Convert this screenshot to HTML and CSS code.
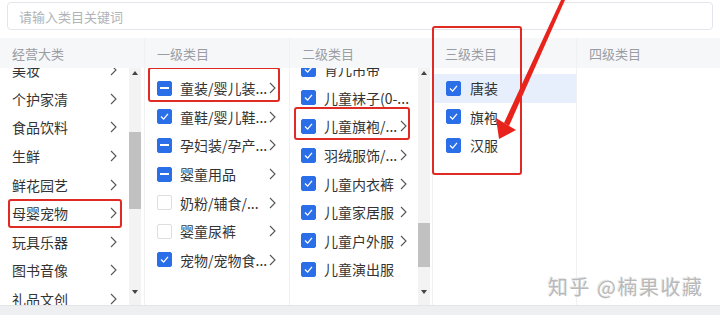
FILE: index.html
```html
<!DOCTYPE html>
<html lang="zh">
<head>
<meta charset="utf-8">
<link rel="stylesheet" href="styles.css">
</head>
<body>
<div class="page">
  <div class="search"><span class="ph">请输入类目关键词</span></div>
  <div class="panel">
    <div class="col c1">
      <div class="hd">经营大类</div>
      <div class="bd">
        <div class="list">
          <div class="inner off1">
            <div class="row"><span class="tx">美妆</span><svg class="chev" viewBox="0 0 7 12"><polyline points="1,1 6,6 1,11"/></svg></div>
            <div class="row"><span class="tx">个护家清</span><svg class="chev" viewBox="0 0 7 12"><polyline points="1,1 6,6 1,11"/></svg></div>
            <div class="row"><span class="tx">食品饮料</span><svg class="chev" viewBox="0 0 7 12"><polyline points="1,1 6,6 1,11"/></svg></div>
            <div class="row"><span class="tx">生鲜</span><svg class="chev" viewBox="0 0 7 12"><polyline points="1,1 6,6 1,11"/></svg></div>
            <div class="row"><span class="tx">鲜花园艺</span><svg class="chev" viewBox="0 0 7 12"><polyline points="1,1 6,6 1,11"/></svg></div>
            <div class="row mark m1"><span class="tx">母婴宠物</span><svg class="chev" viewBox="0 0 7 12"><polyline points="1,1 6,6 1,11"/></svg></div>
            <div class="row"><span class="tx">玩具乐器</span><svg class="chev" viewBox="0 0 7 12"><polyline points="1,1 6,6 1,11"/></svg></div>
            <div class="row"><span class="tx">图书音像</span><svg class="chev" viewBox="0 0 7 12"><polyline points="1,1 6,6 1,11"/></svg></div>
            <div class="row"><span class="tx">礼品文创</span><svg class="chev" viewBox="0 0 7 12"><polyline points="1,1 6,6 1,11"/></svg></div>
          </div>
        </div>
        <div class="sb sb1"><span class="up"></span><span class="thumb"></span><span class="dn"></span></div>
      </div>
    </div>

    <div class="col c2">
      <div class="hd">一级类目</div>
      <div class="bd">
        <div class="list">
          <div class="inner pad">
            <div class="row mark m2"><span class="cb ind"></span><span class="tx">童装/婴儿装...</span><svg class="chev" viewBox="0 0 7 12"><polyline points="1,1 6,6 1,11"/></svg></div>
            <div class="row"><span class="cb on"><svg viewBox="0 0 15 15"><polyline points="3.5,7.5 6.5,10.5 11.5,4.5"/></svg></span><span class="tx">童鞋/婴儿鞋...</span><svg class="chev" viewBox="0 0 7 12"><polyline points="1,1 6,6 1,11"/></svg></div>
            <div class="row"><span class="cb ind"></span><span class="tx">孕妇装/孕产...</span><svg class="chev" viewBox="0 0 7 12"><polyline points="1,1 6,6 1,11"/></svg></div>
            <div class="row"><span class="cb ind"></span><span class="tx">婴童用品</span><svg class="chev" viewBox="0 0 7 12"><polyline points="1,1 6,6 1,11"/></svg></div>
            <div class="row"><span class="cb"></span><span class="tx">奶粉/辅食/...</span><svg class="chev" viewBox="0 0 7 12"><polyline points="1,1 6,6 1,11"/></svg></div>
            <div class="row"><span class="cb"></span><span class="tx">婴童尿裤</span><svg class="chev" viewBox="0 0 7 12"><polyline points="1,1 6,6 1,11"/></svg></div>
            <div class="row"><span class="cb on"><svg viewBox="0 0 15 15"><polyline points="3.5,7.5 6.5,10.5 11.5,4.5"/></svg></span><span class="tx">宠物/宠物食...</span><svg class="chev" viewBox="0 0 7 12"><polyline points="1,1 6,6 1,11"/></svg></div>
          </div>
        </div>
      </div>
    </div>

    <div class="col c3">
      <div class="hd">二级类目</div>
      <div class="bd">
        <div class="list">
          <div class="inner off3">
            <div class="row"><span class="cb on"><svg viewBox="0 0 15 15"><polyline points="3.5,7.5 6.5,10.5 11.5,4.5"/></svg></span><span class="tx">育儿吊带</span></div>
            <div class="row"><span class="cb on"><svg viewBox="0 0 15 15"><polyline points="3.5,7.5 6.5,10.5 11.5,4.5"/></svg></span><span class="tx">儿童袜子(0-...</span></div>
            <div class="row mark m3"><span class="cb on"><svg viewBox="0 0 15 15"><polyline points="3.5,7.5 6.5,10.5 11.5,4.5"/></svg></span><span class="tx">儿童旗袍/...</span><svg class="chev" viewBox="0 0 7 12"><polyline points="1,1 6,6 1,11"/></svg></div>
            <div class="row"><span class="cb on"><svg viewBox="0 0 15 15"><polyline points="3.5,7.5 6.5,10.5 11.5,4.5"/></svg></span><span class="tx">羽绒服饰/...</span><svg class="chev" viewBox="0 0 7 12"><polyline points="1,1 6,6 1,11"/></svg></div>
            <div class="row"><span class="cb on"><svg viewBox="0 0 15 15"><polyline points="3.5,7.5 6.5,10.5 11.5,4.5"/></svg></span><span class="tx">儿童内衣裤</span><svg class="chev" viewBox="0 0 7 12"><polyline points="1,1 6,6 1,11"/></svg></div>
            <div class="row"><span class="cb on"><svg viewBox="0 0 15 15"><polyline points="3.5,7.5 6.5,10.5 11.5,4.5"/></svg></span><span class="tx">儿童家居服</span><svg class="chev" viewBox="0 0 7 12"><polyline points="1,1 6,6 1,11"/></svg></div>
            <div class="row"><span class="cb on"><svg viewBox="0 0 15 15"><polyline points="3.5,7.5 6.5,10.5 11.5,4.5"/></svg></span><span class="tx">儿童户外服</span><svg class="chev" viewBox="0 0 7 12"><polyline points="1,1 6,6 1,11"/></svg></div>
            <div class="row"><span class="cb on"><svg viewBox="0 0 15 15"><polyline points="3.5,7.5 6.5,10.5 11.5,4.5"/></svg></span><span class="tx">儿童演出服</span></div>
          </div>
        </div>
        <div class="sb sb3"><span class="up"></span><span class="thumb"></span><span class="dn"></span></div>
      </div>
    </div>

    <div class="col c4">
      <div class="hd">三级类目</div>
      <div class="bd">
        <div class="list">
          <div class="inner pad">
            <div class="row active"><span class="cb on"><svg viewBox="0 0 15 15"><polyline points="3.5,7.5 6.5,10.5 11.5,4.5"/></svg></span><span class="tx">唐装</span></div>
            <div class="row"><span class="cb on"><svg viewBox="0 0 15 15"><polyline points="3.5,7.5 6.5,10.5 11.5,4.5"/></svg></span><span class="tx">旗袍</span></div>
            <div class="row"><span class="cb on"><svg viewBox="0 0 15 15"><polyline points="3.5,7.5 6.5,10.5 11.5,4.5"/></svg></span><span class="tx">汉服</span></div>
          </div>
        </div>
      </div>
      <div class="colbox"></div>
    </div>

    <div class="col c5">
      <div class="hd">四级类目</div>
      <div class="bd"></div>
    </div>
  </div>
  <div class="foot"></div>

  <div class="wm">知乎 @楠果收藏</div>
  <svg class="arrow" viewBox="0 0 720 315">
    <polygon points="561,0 565,0 509,126 504,123"/>
    <polygon points="499,139 496,118 516,130"/>
  </svg>
</div>
</body>
</html>
```

FILE: styles.css
```css
* { box-sizing: border-box; }
html, body { margin: 0; padding: 0; background: #fff; }
body {
  font-family: "Noto Sans CJK SC", "Noto Sans", sans-serif;
  color: #333;
  width: 720px;
  height: 315px;
  overflow: hidden;
}
.page { position: relative; width: 720px; height: 315px; display: flex; flex-direction: column; }

.search {
  margin: 2px 7px 0 7px;
  height: 28px;
  border: 1px solid #e3e5ea;
  border-radius: 4px;
  display: flex;
  align-items: center;
  padding-left: 11px;
}
.ph { font-size: 13px; color: #b0b3b8; }

.panel {
  margin-top: 8px;
  height: 267px;
  display: grid;
  grid-template-columns: 145px 145px 143px 144px 143px;
}
.col {
  position: relative;
  display: flex;
  flex-direction: column;
  border-right: 1px solid #f0f1f3;
  min-height: 0;
}
.col.c5 { border-right: 0; }
.hd {
  height: 30px;
  flex: none;
  background: #f6f7f9;
  font-size: 13px;
  color: #9a9da3;
  display: flex;
  align-items: center;
  padding-left: 12px;
}
.bd {
  flex: 1;
  display: flex;
  min-height: 0;
  background: #fff;
}
.list { flex: 1; overflow: hidden; position: relative; }
.inner { display: flex; flex-direction: column; }
.inner.off1 { margin-top: -12px; }
.inner.off3 { margin-top: -13px; }
.inner.pad { padding-top: 6px; }

.row {
  position: relative;
  height: 28.6px;
  flex: none;
  display: flex;
  align-items: center;
  font-size: 14px;
  color: #333;
}
.tx { flex: 1; white-space: nowrap; }
.chev { width: 7px; height: 12px; flex: none; }
.chev polyline { fill: none; stroke: #555; stroke-width: 1.1; }

.c1 .row { padding: 0 12px 0 12px; }
.c2 .row { padding: 0 13px 0 12px; }
.c3 .row { padding: 0 11px 0 11px; }
.c4 .row { padding: 0 12px 0 13px; }
.row.active { background: #e8effc; }

.cb {
  width: 15px;
  height: 15px;
  flex: none;
  border: 1px solid #dcdee2;
  border-radius: 2px;
  background: #fff;
  margin-right: 8px;
  display: flex;
  align-items: center;
  justify-content: center;
}
.cb.on, .cb.ind { background: #2b6fe8; border-color: #2b6fe8; }
.cb.ind::before { content: ""; width: 9px; height: 2px; background: #fff; }
.cb svg { width: 15px; height: 15px; }
.cb svg polyline { fill: none; stroke: #fff; stroke-width: 1.5; }
.c4 .cb { margin-right: 9px; }

.mark::after {
  content: "";
  position: absolute;
  border: 2px solid #e02a24;
  border-radius: 3px;
}
.m1::after { top: 0; bottom: 0; left: 8px; right: 7px; }
.m2::after { top: -7px; bottom: 1px; left: 3px; right: 9px; }
.m3::after { top: -5px; bottom: 1px; left: 4px; right: 8px; }

.colbox {
  position: absolute;
  top: -12px;
  left: -1px;
  width: 90px;
  height: 149px;
  border: 2px solid #e02a24;
  border-radius: 3px;
}

.sb {
  width: 12px;
  flex: none;
  margin-right: 3px;
  background: #f3f3f3;
  display: flex;
  flex-direction: column;
  align-items: center;
  padding: 3px 0;
}
.up, .dn {
  width: 0; height: 0;
  border-left: 3.5px solid transparent;
  border-right: 3.5px solid transparent;
  flex: none;
}
.up { border-bottom: 4px solid #444; }
.dn { border-top: 4px solid #444; margin-top: auto; margin-bottom: 8px; }
.thumb { width: 12px; background: #c1c1c1; flex: none; }
.sb1 .thumb { margin-top: 57px; height: 77px; }
.sb3 { margin-right: 2px; }
.sb3 .thumb { margin-top: 148px; height: 44px; }

.foot { flex: 1; background: #eeeff1; border-top: 1px solid #e4e5e7; }

.wm {
  position: absolute;
  left: 548px;
  top: 273px;
  font-size: 20px;
  line-height: 28px;
  letter-spacing: 1.5px;
  color: #b9b9b9;
  text-shadow: 1px 1px 0 #fff, -1px -1px 0 #e6e6e6;
  white-space: nowrap;
}
.arrow {
  position: absolute;
  left: 0;
  top: 0;
  width: 720px;
  height: 315px;
  pointer-events: none;
}
.arrow polygon { fill: #e8231c; }
```
